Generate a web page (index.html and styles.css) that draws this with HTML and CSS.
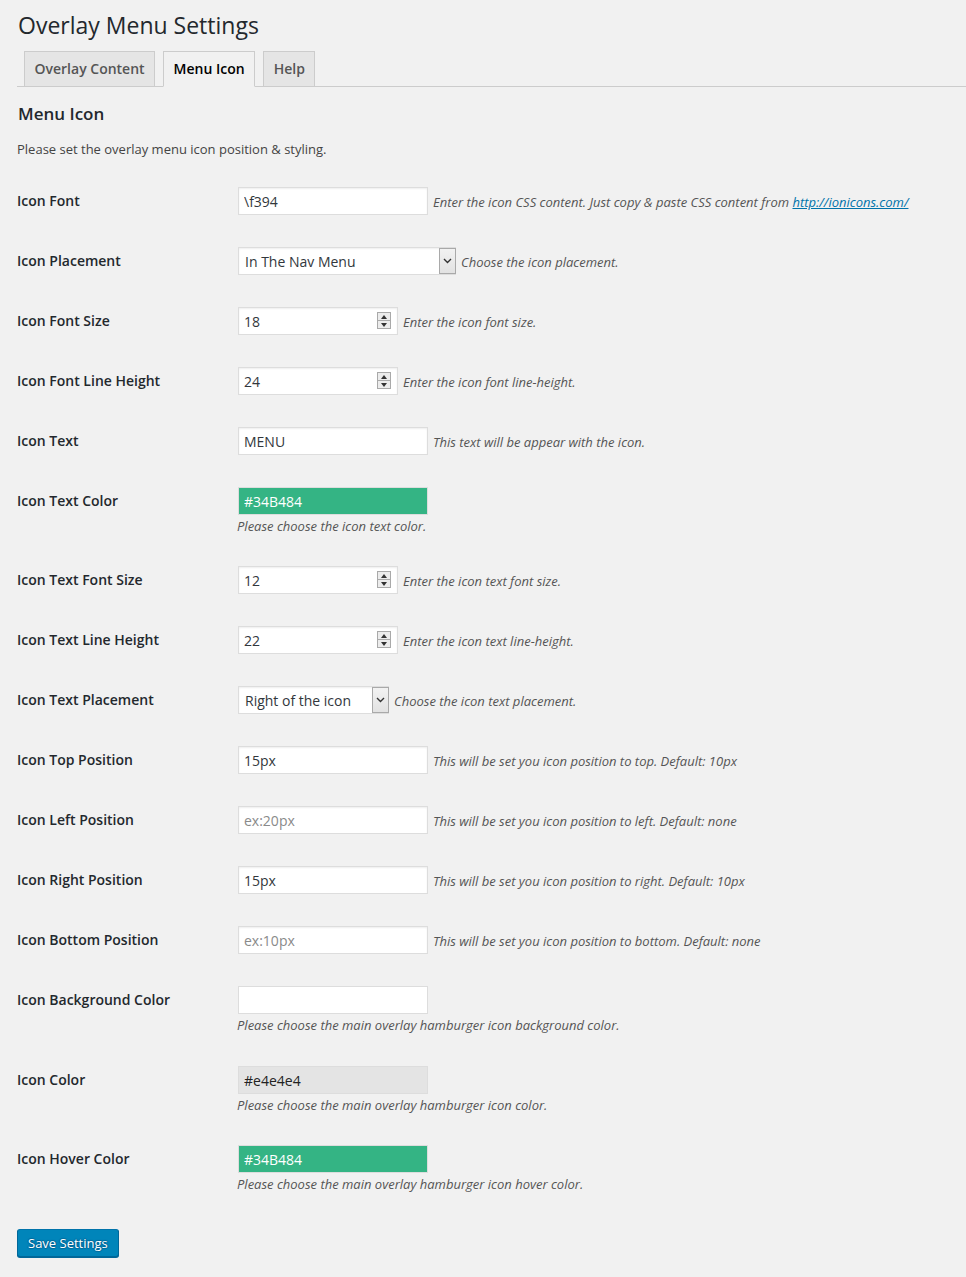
FILE: index.html
```html
<!DOCTYPE html>
<html>
<head>
<meta charset="utf-8">
<link rel="stylesheet" href="styles.css">
</head>
<body>
<div class="wrap">
  <h1 class="title">Overlay Menu Settings</h1>
  <nav class="tabs">
    <a class="tab">Overlay Content</a>
    <a class="tab active">Menu Icon</a>
    <a class="tab">Help</a>
  </nav>
  <h2 class="section-title">Menu Icon</h2>
  <p class="intro">Please set the overlay menu icon position &amp; styling.</p>

  <div class="form">
    <div class="row">
      <label class="label">Icon Font</label>
      <div class="field">
        <div class="inline">
          <input class="text" type="text" value="\f394">
          <span class="desc">Enter the icon CSS content. Just copy &amp; paste CSS content from <a class="link" href="#">http://ionicons.com/</a></span>
        </div>
      </div>
    </div>

    <div class="row">
      <label class="label">Icon Placement</label>
      <div class="field">
        <div class="inline">
          <span class="select-wrap">
            <select class="select wide"><option>In The Nav Menu</option></select>
            <span class="select-arrow"><svg width="9" height="6" viewBox="0 0 9 6"><polyline points="1,1 4.5,4.5 8,1" fill="none" stroke="#333" stroke-width="1.4"/></svg></span>
          </span>
          <span class="desc">Choose the icon placement.</span>
        </div>
      </div>
    </div>

    <div class="row">
      <label class="label">Icon Font Size</label>
      <div class="field">
        <div class="inline">
          <span class="num-wrap">
            <input class="text num" type="text" value="18">
            <span class="spinner"><span class="spin up"></span><span class="spin down"></span></span>
          </span>
          <span class="desc">Enter the icon font size.</span>
        </div>
      </div>
    </div>

    <div class="row">
      <label class="label">Icon Font Line Height</label>
      <div class="field">
        <div class="inline">
          <span class="num-wrap">
            <input class="text num" type="text" value="24">
            <span class="spinner"><span class="spin up"></span><span class="spin down"></span></span>
          </span>
          <span class="desc">Enter the icon font line-height.</span>
        </div>
      </div>
    </div>

    <div class="row">
      <label class="label">Icon Text</label>
      <div class="field">
        <div class="inline">
          <input class="text" type="text" value="MENU">
          <span class="desc">This text will be appear with the icon.</span>
        </div>
      </div>
    </div>

    <div class="row">
      <label class="label">Icon Text Color</label>
      <div class="field">
        <input class="text color green" type="text" value="#34B484">
        <p class="desc block">Please choose the icon text color.</p>
      </div>
    </div>

    <div class="row">
      <label class="label">Icon Text Font Size</label>
      <div class="field">
        <div class="inline">
          <span class="num-wrap">
            <input class="text num" type="text" value="12">
            <span class="spinner"><span class="spin up"></span><span class="spin down"></span></span>
          </span>
          <span class="desc">Enter the icon text font size.</span>
        </div>
      </div>
    </div>

    <div class="row">
      <label class="label">Icon Text Line Height</label>
      <div class="field">
        <div class="inline">
          <span class="num-wrap">
            <input class="text num" type="text" value="22">
            <span class="spinner"><span class="spin up"></span><span class="spin down"></span></span>
          </span>
          <span class="desc">Enter the icon text line-height.</span>
        </div>
      </div>
    </div>

    <div class="row">
      <label class="label">Icon Text Placement</label>
      <div class="field">
        <div class="inline">
          <span class="select-wrap">
            <select class="select narrow"><option>Right of the icon</option></select>
            <span class="select-arrow"><svg width="9" height="6" viewBox="0 0 9 6"><polyline points="1,1 4.5,4.5 8,1" fill="none" stroke="#333" stroke-width="1.4"/></svg></span>
          </span>
          <span class="desc">Choose the icon text placement.</span>
        </div>
      </div>
    </div>

    <div class="row">
      <label class="label">Icon Top Position</label>
      <div class="field">
        <div class="inline">
          <input class="text" type="text" value="15px">
          <span class="desc">This will be set you icon position to top. Default: 10px</span>
        </div>
      </div>
    </div>

    <div class="row">
      <label class="label">Icon Left Position</label>
      <div class="field">
        <div class="inline">
          <input class="text" type="text" placeholder="ex:20px">
          <span class="desc">This will be set you icon position to left. Default: none</span>
        </div>
      </div>
    </div>

    <div class="row">
      <label class="label">Icon Right Position</label>
      <div class="field">
        <div class="inline">
          <input class="text" type="text" value="15px">
          <span class="desc">This will be set you icon position to right. Default: 10px</span>
        </div>
      </div>
    </div>

    <div class="row">
      <label class="label">Icon Bottom Position</label>
      <div class="field">
        <div class="inline">
          <input class="text" type="text" placeholder="ex:10px">
          <span class="desc">This will be set you icon position to bottom. Default: none</span>
        </div>
      </div>
    </div>

    <div class="row row-tall">
      <label class="label">Icon Background Color</label>
      <div class="field">
        <input class="text color" type="text" value="">
        <p class="desc block">Please choose the main overlay hamburger icon background color.</p>
      </div>
    </div>

    <div class="row">
      <label class="label">Icon Color</label>
      <div class="field">
        <input class="text color grey" type="text" value="#e4e4e4">
        <p class="desc block">Please choose the main overlay hamburger icon color.</p>
      </div>
    </div>

    <div class="row">
      <label class="label">Icon Hover Color</label>
      <div class="field">
        <input class="text color green" type="text" value="#34B484">
        <p class="desc block">Please choose the main overlay hamburger icon hover color.</p>
      </div>
    </div>
  </div>

  <div class="submit">
    <button class="button-primary" type="button">Save Settings</button>
  </div>
</div>
</body>
</html>
```

FILE: styles.css
```css
* { box-sizing: border-box; }

html, body {
  margin: 0;
  background: #f1f1f1;
}

body {
  font-family: "Open Sans", "Noto Sans", sans-serif;
  font-size: 13px;
  color: #444;
  height: 1277px;
  overflow: hidden;
}

.wrap {
  padding: 0 0 0 17px;
}

.title {
  margin: 0;
  padding: 11px 0 0 1px;
  font-size: 23px;
  line-height: 29px;
  font-weight: 400;
  color: #23282d;
}

.tabs {
  display: flex;
  gap: 8px;
  margin-top: 11px;
  padding-left: 7px;
  border-bottom: 1px solid #ccc;
  height: 36px;
}

.tab {
  display: block;
  height: 36px;
  padding: 5px 9.5px;
  border: 1px solid #ccc;
  background: #e5e5e5;
  color: #555;
  font-size: 14px;
  font-weight: 600;
  line-height: 24px;
}

.tab.active {
  background: #f1f1f1;
  color: #000;
  border-bottom-color: #f1f1f1;
}

.section-title {
  margin: 15px 0 0 1px;
  font-size: 17px;
  line-height: 24px;
  font-weight: 600;
  color: #23282d;
}

.intro {
  margin: 14px 0 0 0;
  font-size: 13px;
  line-height: 19px;
  color: #444;
}

.form {
  margin-top: 12px;
}

.row {
  display: flex;
  padding: 16px 0 16px 0;
}

.row:has(.block) {
  padding-bottom: 14px;
}

.row.row-tall {
  padding-bottom: 15px;
}

.label {
  width: 221px;
  flex: none;
  font-size: 14px;
  font-weight: 600;
  line-height: 28px;
  color: #23282d;
}

.field {
  flex: 1;
}

.inline {
  display: flex;
  align-items: center;
  gap: 5px;
}

.text {
  display: block;
  width: 190px;
  height: 28px;
  margin: 0;
  padding: 3px 5px;
  border: 1px solid #ddd;
  box-shadow: inset 0 1px 2px rgba(0, 0, 0, 0.07);
  background: #fff;
  color: #32373c;
  font-family: "Open Sans", "Noto Sans", sans-serif;
  font-size: 14px;
  outline: none;
}

.text::placeholder {
  color: #8a8a8a;
}

.color {
  box-shadow: none;
}

.color.green {
  background: #34b484;
  color: #fff;
}

.color.grey {
  background: #e4e4e4;
  color: #222;
}

.num-wrap,
.select-wrap {
  position: relative;
  display: block;
}

.num {
  width: 160px;
}

.spinner {
  position: absolute;
  top: 5px;
  right: 7px;
  width: 14px;
  height: 17px;
  display: flex;
  flex-direction: column;
  border: 1px solid #a9a9a9;
  background: #ececec;
}

.spin {
  flex: 1;
  position: relative;
}

.spin.up {
  border-bottom: 1px solid #a9a9a9;
}

.spin::after {
  content: "";
  position: absolute;
  left: 3px;
  top: 2px;
  border-left: 3px solid transparent;
  border-right: 3px solid transparent;
}

.spin.up::after {
  border-bottom: 4px solid #333;
}

.spin.down::after {
  top: 2px;
  border-top: 4px solid #333;
}

.select {
  display: block;
  -webkit-appearance: none;
  appearance: none;
  height: 28px;
  margin: 0;
  padding: 0 6px;
  border: 1px solid #ddd;
  background: #fff;
  color: #32373c;
  font-family: "Open Sans", "Noto Sans", sans-serif;
  font-size: 14px;
  outline: none;
  box-shadow: inset 0 1px 2px rgba(0, 0, 0, 0.07);
}

.select.wide { width: 218px; }
.select.narrow { width: 151px; }

.select-arrow {
  position: absolute;
  top: 1px;
  right: 0;
  width: 17px;
  height: 26px;
  border: 1px solid #a9a9a9;
  background: linear-gradient(#f2f2f2, #e2e2e2);
  display: flex;
  align-items: center;
  justify-content: center;
}

.desc {
  font-style: italic;
  font-size: 13px;
  line-height: 19px;
  color: #555;
  padding-top: 3px;
}

.desc.block {
  margin: 2px 0 0 -1px;
  padding-top: 0;
}

.link {
  color: #0073aa;
  text-decoration: underline;
}

.submit {
  margin-top: 21px;
}

.button-primary {
  height: 28px;
  padding: 0 10px 1px;
  border: 1px solid;
  border-color: #0073aa #006799 #006799;
  border-radius: 3px;
  background: #0085ba;
  box-shadow: 0 1px 0 #006799;
  color: #fff;
  text-shadow: 0 -1px 1px #006799, 1px 0 1px #006799, 0 1px 1px #006799, -1px 0 1px #006799;
  font-family: "Open Sans", "Noto Sans", sans-serif;
  font-size: 13px;
  line-height: 26px;
}
```
